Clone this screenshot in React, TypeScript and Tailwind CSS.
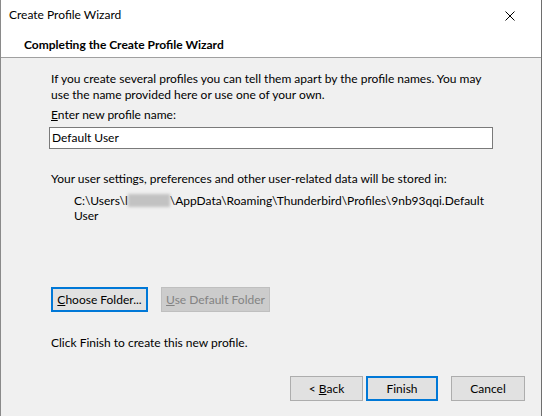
import React from "react";

const font = { fontFamily: "Lato, 'Noto Sans', sans-serif" };

const Btn = ({
  children,
  focused,
  disabled,
  className,
}: {
  children: React.ReactNode;
  focused?: boolean;
  disabled?: boolean;
  className?: string;
}) => {
  let cls = "h-[25px] flex items-center justify-center text-[12px] ";
  if (disabled) cls += "bg-[#cccccc] border border-[#bfbfbf] text-[#838383] ";
  else if (focused) cls += "bg-[#e1e1e1] border-2 border-[#0078d7] text-black ";
  else cls += "bg-[#e1e1e1] border border-[#adadad] text-black ";
  return <div className={cls + (className ?? "")}>{children}</div>;
};

export default function App() {
  return (
    <div
      className="w-[542px] h-[416px] flex flex-col border-l border-l-[#8a8a8a] border-r border-r-[#6e6e6e] bg-white text-black text-[12px]"
      style={font}
    >
      {/* title bar */}
      <div className="h-[30px] flex items-center justify-between pl-[8px] pr-[26px]">
        <span>Create Profile Wizard</span>
        <svg width="10" height="10" viewBox="0 0 10 10" className="mt-[1px]">
          <path d="M0.5 0.5 L9.5 9.5 M9.5 0.5 L0.5 9.5" stroke="#000" strokeWidth="1" fill="none" />
        </svg>
      </div>

      {/* wizard header */}
      <div className="h-[28px] pl-[23px] pt-[6px] border-b border-b-[#a0a0a0] font-bold">
        Completing the Create Profile Wizard
      </div>

      {/* body */}
      <div className="flex-1 bg-[#f0f0f0] flex flex-col pl-[50px] pr-[48px] pt-[13px] leading-[16px]">
        <p>
          If you create several profiles you can tell them apart by the profile names. You may
          use the name provided here or use one of your own.
        </p>
        <p className="mt-[4px]">
          <span className="underline">E</span>nter new profile name:
        </p>
        <div className="mt-[4px] -ml-[2px] h-[22px] w-[444px] bg-white border border-[#7a7a7a] flex items-center pl-[2px]">
          Default User
        </div>

        <p className="mt-[22px]">
          Your user settings, preferences and other user-related data will be stored in:
        </p>
        <div className="mt-[6px] pl-[23px] leading-[15px]">
          <div className="flex items-center">
            C:\Users\l
            <span className="inline-block w-[42px] h-[13px] bg-[#c2c2c2] blur-[1.5px]" />
            \AppData\Roaming\Thunderbird\Profiles\9nb93qqi.Default
          </div>
          <div>User</div>
        </div>

        <div className="mt-[64px] flex gap-[13px]">
          <Btn focused className="w-[97px]">
            <span>
              <span className="underline">C</span>hoose Folder...
            </span>
          </Btn>
          <Btn disabled className="w-[109px]">
            <span>
              <span className="underline">U</span>se Default Folder
            </span>
          </Btn>
        </div>

        <p className="mt-[23px]">Click Finish to create this new profile.</p>

        <div className="mt-[25px] -mr-[32px] flex justify-end">
          <Btn className="w-[73px]">
            <span>
              &lt; <span className="underline">B</span>ack
            </span>
          </Btn>
          <Btn focused className="w-[72px] ml-[3px]">
            Finish
          </Btn>
          <Btn className="w-[74px] ml-[13px]">Cancel</Btn>
        </div>
      </div>
    </div>
  );
}
